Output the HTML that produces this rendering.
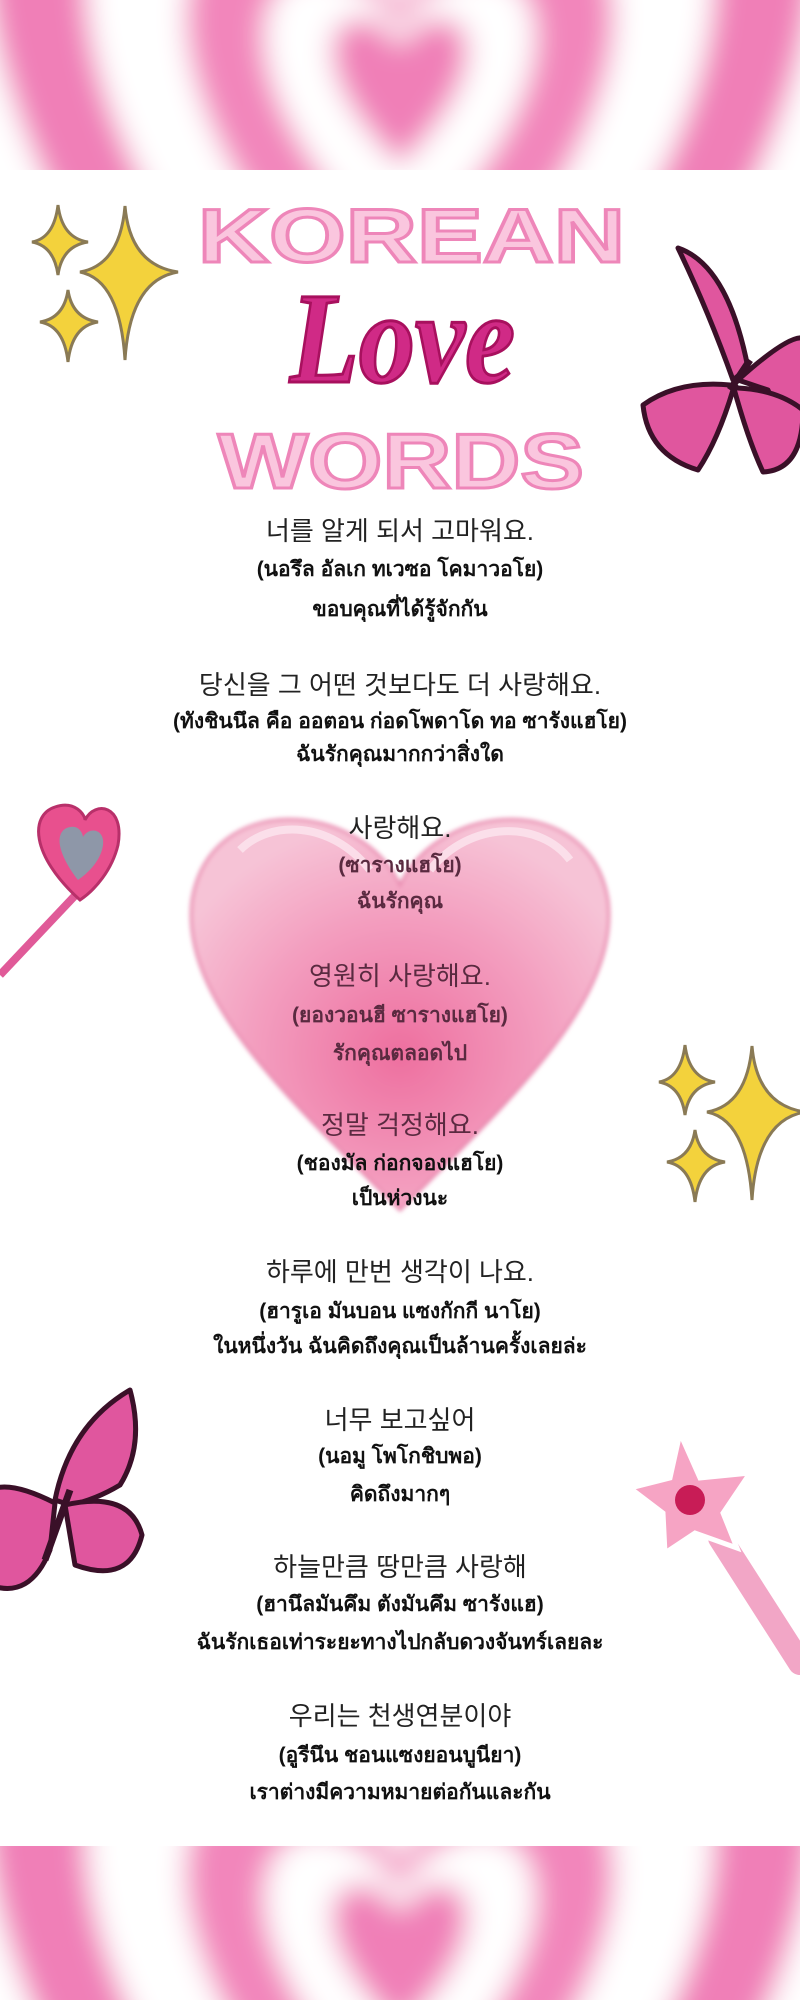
<!DOCTYPE html>
<html style="width:800px;height:2000px;overflow:hidden"><head><meta charset="utf-8"><style>
*{margin:0;padding:0}
body{width:800px;height:2000px;position:relative;background:#fff;overflow:hidden;font-family:"Liberation Sans","Noto Sans CJK KR",sans-serif}
.l{position:absolute;left:0;width:800px;text-align:center;white-space:nowrap;line-height:36px}
.k{font-size:26px;color:#222}
.t{font-size:21px;font-weight:bold;color:#111}
.p{color:#5a2a40}
svg{position:absolute;overflow:hidden}
</style></head><body>
<svg width="800" height="170" style="left:0;top:0">
<defs><filter id="b"><feGaussianBlur stdDeviation="14"/></filter>
<path id="h" d="M0,-0.35 C-0.45,-1.05 -1.35,-0.45 0,0.9 C1.35,-0.45 0.45,-1.05 0,-0.35Z"/></defs>
<rect width="800" height="170" fill="#f07fb7"/>
<g filter="url(#b)">
<use href="#h" transform="translate(400,130) scale(720)" fill="#fff"/>
<use href="#h" transform="translate(400,130) scale(580)" fill="#f07fb7"/>
<use href="#h" transform="translate(400,120) scale(440)" fill="#fff"/>
<use href="#h" transform="translate(400,110) scale(300)" fill="#f286bb"/>
<use href="#h" transform="translate(400,95) scale(190)" fill="#fff"/>
<use href="#h" transform="translate(400,80) scale(95)" fill="#f07fb7"/>
</g></svg>
<svg width="800" height="154" style="left:0;top:1846px">
<rect width="800" height="154" fill="#f07fb7"/>
<g filter="url(#b)">
<use href="#h" transform="translate(400,140) scale(720)" fill="#fff"/>
<use href="#h" transform="translate(400,140) scale(580)" fill="#f07fb7"/>
<use href="#h" transform="translate(400,130) scale(440)" fill="#fff"/>
<use href="#h" transform="translate(400,120) scale(300)" fill="#f286bb"/>
<use href="#h" transform="translate(400,110) scale(190)" fill="#fff"/>
<use href="#h" transform="translate(400,100) scale(95)" fill="#f07fb7"/>
</g></svg>

<svg width="800" height="300" style="left:0;top:200px">
<text x="198" y="62" textLength="427" lengthAdjust="spacingAndGlyphs" font-family="Liberation Sans" font-weight="bold" font-size="76" fill="#fac6de" stroke="#ee86b9" stroke-width="3">KOREAN</text>
<text x="290" y="182" textLength="225" lengthAdjust="spacingAndGlyphs" font-family="Liberation Serif" font-weight="bold" font-style="italic" font-size="130" fill="#d02a86" stroke="#a8105e" stroke-width="3">Love</text>
<text x="218" y="288" textLength="366" lengthAdjust="spacingAndGlyphs" font-family="Liberation Sans" font-weight="bold" font-size="78" fill="#fac6de" stroke="#ee86b9" stroke-width="3">WORDS</text>
</svg>

<svg width="160" height="170" style="left:28px;top:200px">
<g fill="#f3d23c" stroke="#8a7a55" stroke-width="3">
<path d="M30,5 Q34,38 60,42 Q34,46 30,75 Q26,46 4,42 Q26,38 30,5Z"/>
<path d="M97,6 Q102,65 150,72 Q102,80 97,160 Q92,80 52,72 Q92,65 97,6Z"/>
<path d="M40,90 Q44,118 70,122 Q44,126 40,162 Q36,126 12,122 Q36,118 40,90Z"/>
</g></svg>
<svg width="150" height="170" style="left:655px;top:1040px">
<g fill="#f3d23c" stroke="#8a7a55" stroke-width="3">
<path d="M30,5 Q34,38 60,42 Q34,46 30,75 Q26,46 4,42 Q26,38 30,5Z"/>
<path d="M97,6 Q102,65 150,72 Q102,80 97,160 Q92,80 52,72 Q92,65 97,6Z"/>
<path d="M40,90 Q44,118 70,122 Q44,126 40,162 Q36,126 12,122 Q36,118 40,90Z"/>
</g></svg>

<!-- right butterfly -->
<svg width="162" height="240" style="left:638px;top:240px">
<g fill="#e0569e" stroke="#3a1028" stroke-width="5" stroke-linejoin="round">
<path d="M100,140 Q150,95 165,98 L165,170 Q150,200 130,150Z"/>
<path d="M95,145 Q110,200 125,232 Q165,230 165,170 Q140,150 100,148Z"/>
<path d="M95,140 Q70,70 40,8 Q90,25 110,128Z"/>
<path d="M92,145 Q40,140 5,165 Q10,215 60,230 Q80,200 95,150Z"/>
</g>
<path d="M92,150 L112,120" stroke="#3a1028" stroke-width="7"/>
</svg>
<!-- left butterfly -->
<svg width="150" height="220" style="left:0;top:1385px">
<g fill="#e0569e" stroke="#3a1028" stroke-width="5" stroke-linejoin="round">
<path d="M55,115 Q70,40 130,5 Q145,60 120,100 Q95,115 70,120Z"/>
<path d="M55,118 Q10,95 -10,105 L-10,200 Q30,215 50,165Z"/>
<path d="M65,120 Q130,105 142,150 Q130,200 75,180Z"/>
</g>
<path d="M45,175 L70,105" stroke="#3a1028" stroke-width="7"/>
</svg>

<svg width="125" height="190" style="left:0;top:795px">
<path d="M85,90 L0,180" stroke="#e05a98" stroke-width="8"/>
<path d="M80,105 C30,60 30,20 55,12 C75,5 85,20 85,25 C95,5 125,10 118,50 C112,75 95,95 80,105Z" fill="#e8508e" stroke="#b8306a" stroke-width="3"/>
<path d="M78,85 C55,55 55,35 70,32 C80,30 83,40 83,42 C90,30 108,35 102,55 C98,68 88,78 78,85Z" fill="#8e97a8"/>
</svg>
<svg width="180" height="250" style="left:625px;top:1428px">
<path d="M95,110 L175,235" stroke="#f2a6c6" stroke-width="24" stroke-linecap="round"/>
<path d="M55,5 L75,50 L125,45 L98,85 L112,120 L70,105 L40,125 L38,85 L5,60 L45,50Z" fill="#f6a4c4" stroke="#fff" stroke-width="5"/>
<circle cx="65" cy="72" r="15" fill="#c81c56"/>
</svg>

<svg width="440" height="440" style="left:180px;top:790px">
<defs><radialGradient id="g" cx="0.5" cy="0.6" r="0.6"><stop offset="0" stop-color="#ee6f9f"/><stop offset="0.55" stop-color="#f39bbd"/><stop offset="1" stop-color="#f6c3d6"/></radialGradient>
<filter id="s"><feGaussianBlur stdDeviation="2"/></filter></defs>
<path d="M220,95 C180,10 30,0 12,110 C0,210 110,310 220,420 C330,310 440,210 428,110 C410,0 260,10 220,95Z" fill="url(#g)" stroke="#e98bb0" stroke-width="3" filter="url(#s)"/>
<path d="M60,60 C90,30 150,30 190,80" stroke="#fde6ef" stroke-width="8" fill="none" opacity="0.8"/>
<path d="M250,80 C290,30 360,30 390,70" stroke="#fde6ef" stroke-width="8" fill="none" opacity="0.8"/>
</svg>

<div class="l k" style="top:513px">너를 알게 되서 고마워요.</div>
<div class="l t" style="top:552px">(นอรึล อัลเก ทเวซอ โคมาวอโย)</div>
<div class="l t" style="top:592px">ขอบคุณที่ได้รู้จักกัน</div>

<div class="l k" style="top:667px">당신을 그 어떤 것보다도 더 사랑해요.</div>
<div class="l t" style="top:704px">(ทังชินนึล คือ ออตอน ก่อดโพดาโด ทอ ซารังแฮโย)</div>
<div class="l t" style="top:737px">ฉันรักคุณมากกว่าสิ่งใด</div>

<div class="l k" style="top:810px">사랑해요.</div>
<div class="l t p" style="top:848px">(ซารางแฮโย)</div>
<div class="l t p" style="top:884px">ฉันรักคุณ</div>

<div class="l k p" style="top:958px">영원히 사랑해요.</div>
<div class="l t p" style="top:998px">(ยองวอนฮี ซารางแฮโย)</div>
<div class="l t p" style="top:1036px">รักคุณตลอดไป</div>

<div class="l k p" style="top:1107px">정말 걱정해요.</div>
<div class="l t" style="top:1146px">(ชองมัล ก่อกจองแฮโย)</div>
<div class="l t" style="top:1181px">เป็นห่วงนะ</div>

<div class="l k" style="top:1254px">하루에 만번 생각이 나요.</div>
<div class="l t" style="top:1294px">(ฮารูเอ มันบอน แซงกักกี นาโย)</div>
<div class="l t" style="top:1329px">ในหนึ่งวัน ฉันคิดถึงคุณเป็นล้านครั้งเลยล่ะ</div>

<div class="l k" style="top:1402px">너무 보고싶어</div>
<div class="l t" style="top:1439px">(นอมู โพโกชิบพอ)</div>
<div class="l t" style="top:1477px">คิดถึงมากๆ</div>

<div class="l k" style="top:1549px">하늘만큼 땅만큼 사랑해</div>
<div class="l t" style="top:1587px">(ฮานึลมันคึม ตังมันคึม ซารังแฮ)</div>
<div class="l t" style="top:1625px">ฉันรักเธอเท่าระยะทางไปกลับดวงจันทร์เลยละ</div>

<div class="l k" style="top:1698px">우리는 천생연분이야</div>
<div class="l t" style="top:1738px">(อูรีนึน ชอนแซงยอนบูนียา)</div>
<div class="l t" style="top:1775px">เราต่างมีความหมายต่อกันและกัน</div>
</body></html>
